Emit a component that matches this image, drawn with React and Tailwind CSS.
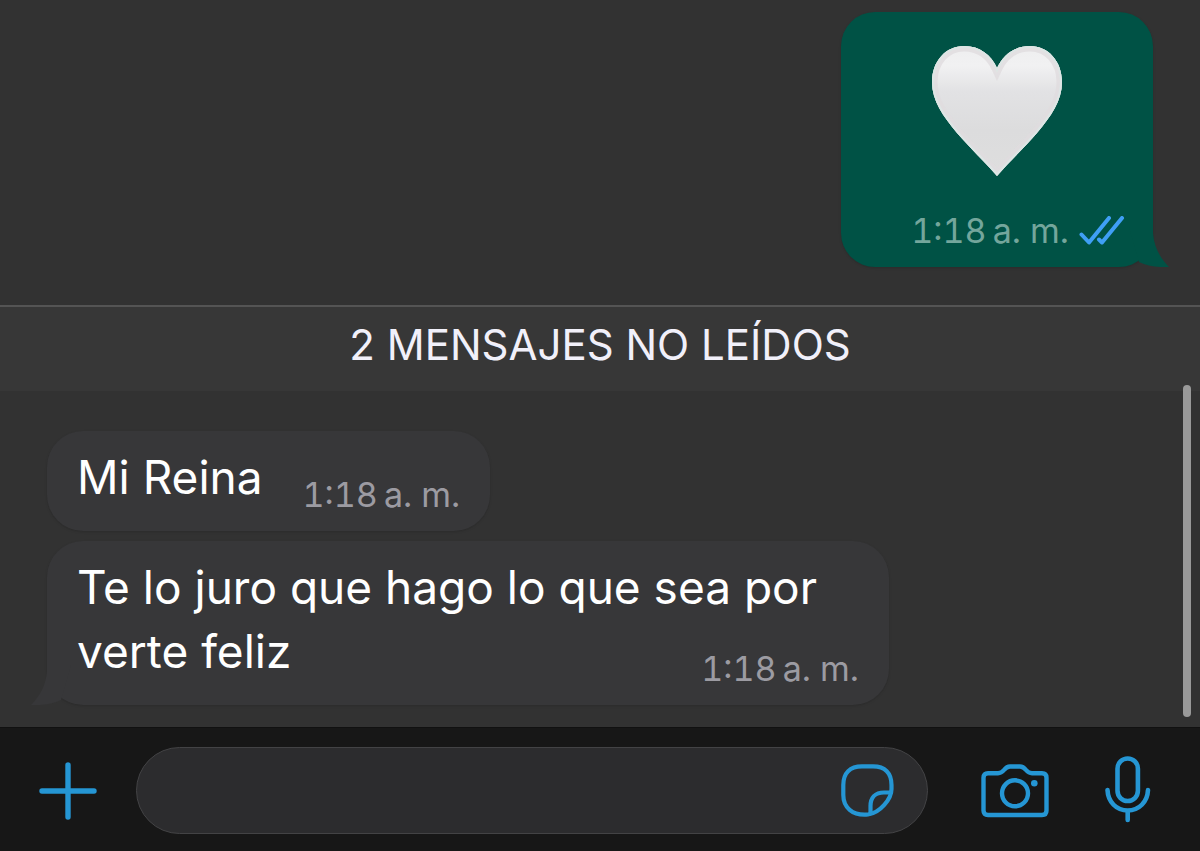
import React from "react";

const HEART =
  "M65 130C53 116 38 102 25 87C11 70 0 55 0 36C0 15 14 0 32 0C48 0 59 9 65 22C71 9 82 0 98 0C116 0 130 15 130 36C130 55 119 70 105 87C92 102 77 116 65 130Z";

function Time({ className = "" }) {
  return (
    <time dateTime="01:18" className={`text-[34px] leading-8 whitespace-nowrap tabular-nums ${className}`}>
      {"1:18\u202fa. m."}
    </time>
  );
}

function Heart() {
  return (
    <svg viewBox="0 0 130 130" className="size-[130px]" role="img" aria-label="Corazón blanco">
      <defs>
        <linearGradient id="heart-fill" x1="0" y1="0" x2="0" y2="1">
          <stop offset="0" stopColor="#eeeeef" />
          <stop offset="0.15" stopColor="#f1f1f2" />
          <stop offset="0.35" stopColor="#e2e2e4" />
          <stop offset="0.65" stopColor="#dcdcdd" />
          <stop offset="1" stopColor="#dedede" />
        </linearGradient>
        <clipPath id="heart-clip">
          <path d={HEART} />
        </clipPath>
      </defs>
      <g clipPath="url(#heart-clip)">
        <rect width="130" height="130" fill="url(#heart-fill)" />
        <path d={HEART} fill="none" stroke="#e0dcde" strokeOpacity="0.8" strokeWidth="11" />
        <path d={HEART} fill="none" stroke="#dde6e5" strokeWidth="4" />
      </g>
    </svg>
  );
}

function Checks() {
  return (
    <svg viewBox="0 0 46 30" className="h-[30px] w-[46px]" fill="none" stroke="#3f9ff5" strokeWidth="4" strokeLinecap="round" strokeLinejoin="round" role="img" aria-label="Leído">
      <path d="M2.500 18.500L10 26.500L30 2" />
      <path d="M20 23.500L23 26.500L43 2" />
    </svg>
  );
}

function Tail({ className }) {
  return (
    <svg viewBox="0 0 40 40" className={`absolute bottom-0 size-10 ${className}`} aria-hidden="true">
      <path d="M0 0H24V6C25 20 31 31 40 40C28 40.500 18 39 10 35Z" fill="currentColor" />
    </svg>
  );
}

function Plus() {
  return (
    <svg viewBox="0 0 58 58" className="size-[58px]" fill="none" strokeWidth="5.4" strokeLinecap="round" stroke="currentColor" aria-hidden="true">
      <path d="M29 3V55M3 29H55" />
    </svg>
  );
}

function Sticker() {
  return (
    <svg viewBox="0 0 53 53" className="size-[53px]" fill="none" strokeWidth="4.2" strokeLinecap="round" strokeLinejoin="round" stroke="currentColor" aria-hidden="true">
      <path d="M27 50.500C11 52 2.300 43 2.300 31V21C2.300 9 9 2.300 21 2.300H32C44 2.300 50.500 9 50.500 21V25C50.500 35 39 49 27 50.500Z" />
      <path d="M50 28.500H43C34 28.500 29.500 34 29.500 42V49.500" />
    </svg>
  );
}

function Camera() {
  return (
    <svg viewBox="0 0 68 54" className="h-[54px] w-[68px]" fill="none" strokeWidth="4.400" strokeLinecap="round" strokeLinejoin="round" stroke="currentColor" aria-hidden="true">
      <path d="M7 9.300H17C20 9.300 21 8.500 23 6C25 3.500 26 2.500 29 2.500H39C42 2.500 43 3.500 45 6C47 8.500 48 9.300 51 9.300H61C64 9.300 65.500 10.800 65.500 13.800V46.500C65.500 49.500 64 51 61 51H7C4 51 2.500 49.500 2.500 46.500V13.800C2.500 10.800 4 9.300 7 9.300Z" />
      <circle cx="34" cy="29.300" r="13" />
      <circle cx="53.300" cy="19.300" r="3.300" fill="currentColor" stroke="none" />
    </svg>
  );
}

function Mic() {
  return (
    <svg viewBox="0 0 46 70" className="h-[70px] w-[46px]" fill="none" strokeWidth="4.600" strokeLinecap="round" stroke="currentColor" aria-hidden="true">
      <rect x="12.500" y="2.500" width="20.400" height="42.500" rx="10.200" />
      <path d="M2.500 34C3 46 11.500 54.500 22.700 54.500S42.500 46 43 34M22.700 54.500V64" />
    </svg>
  );
}

export default function App() {
  return (
    <div className="flex min-h-screen flex-col bg-[#323232] font-['Inter','Liberation_Sans',sans-serif] text-white">
      <main className="relative flex flex-1 flex-col">
        <div className="flex justify-end pt-3 pr-[47px] pb-[38px]">
          <article className="relative flex w-78 flex-col items-center gap-[39px] rounded-[34px] bg-[#005245] px-7 pt-[34px] pb-5 shadow-sm">
            <Heart />
            <div className="flex items-center gap-[10px] self-end text-[#74a69c]">
              <Time />
              <Checks />
            </div>
            <Tail className="-right-4 text-[#005245]" />
          </article>
        </div>

        <h2 className="border-t-2 border-[#545454] bg-[#373737] pt-[10px] pb-[18px] text-center text-[42px] leading-[56px] text-[#f1f0fa]">
          2 MENSAJES NO LEÍDOS
        </h2>

        <div className="flex flex-1 flex-col items-start gap-[10px] px-[47px] pt-10 pb-[22px] text-[46px] leading-16">
          <article className="flex items-end gap-10 rounded-[36px] bg-[#373739] px-[30px] pt-[14px] pb-5 shadow-sm">
            <p className="pb-[2px]">Mi Reina</p>
            <Time className="text-[#9c9ba2]" />
          </article>
          <article className="relative w-[842px] max-w-full rounded-[36px] bg-[#373739] px-[30px] pt-[14px] pb-5 shadow-sm">
            <Tail className="-left-4 -scale-x-100 text-[#373739]" />
            <p>
              Te lo juro que hago lo que sea por{" "}
              <span className="flex items-end justify-between">
                <span className="pb-[2px]">verte feliz</span>
                <Time className="text-[#9c9ba2]" />
              </span>
            </p>
          </article>
        </div>

        <div className="absolute right-[9px] bottom-[10px] h-[332px] w-2 rounded-full bg-[#999999]" />
      </main>

      <footer className="flex items-center border-t border-[#111111] bg-[#171717] pt-[19px] pr-[49px] pb-[17px] pl-[39px] text-[#2596d4]">
        <button type="button" aria-label="Adjuntar" className="shrink-0">
          <Plus />
        </button>
        <div className="ml-[39px] flex h-[87px] min-w-0 flex-1 items-center rounded-full border border-[#434345] bg-[#2c2c2e] pr-[33px] pl-10">
          <input type="text" aria-label="Mensaje" className="min-w-0 flex-1 bg-transparent text-4xl text-white outline-none" />
          <button type="button" aria-label="Stickers" className="shrink-0">
            <Sticker />
          </button>
        </div>
        <button type="button" aria-label="Cámara" className="ml-[53px] shrink-0">
          <Camera />
        </button>
        <button type="button" aria-label="Grabar audio" className="ml-14 shrink-0">
          <Mic />
        </button>
      </footer>
    </div>
  );
}
